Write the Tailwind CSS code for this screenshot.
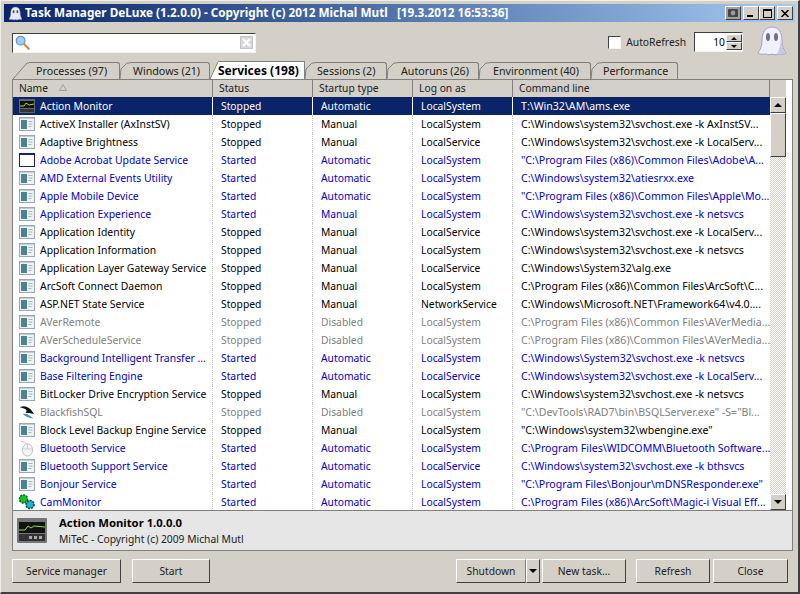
<!DOCTYPE html>
<html lang="en">
<head>
  <meta charset="UTF-8">
  <title>Task Manager DeLuxe</title>
  <script src="https://cdn.jsdelivr.net/npm/@tailwindcss/browser@4"></script>
</head>
<body class="w-[800px] h-[594px] overflow-hidden bg-[#d4d0c8] font-['Noto_Sans','Liberation_Sans',sans-serif] text-[10.3px] leading-none text-black">
  <div class="w-[800px] h-[594px] flex flex-col pt-[4px] px-[4px] pb-[4px] border-b-[2px] border-r-[2px] border-t border-l border-b-[#404040] border-r-[#404040] border-t-[#f0eee8] border-l-[#f0eee8]">
    <!-- title bar -->
    <div class="h-[18px] -mt-[1px] -mx-[1px] flex items-center justify-between bg-gradient-to-r from-[#0a246a] to-[#a6caf0] pl-[4px] pr-[2px] shrink-0">
      <div class="flex items-center gap-[2px] text-white font-bold text-[11.75px] whitespace-pre">
        <svg width="15" height="15" viewBox="0 0 32 32"><path d="M16 2C9 2 6 8 6 15c0 6-2 10-4 13 3 2 6 0 8 1 2 1 4 1 6 0 2 1 4 1 6 0 2-1 5 1 8-1-2-3-4-7-4-13 0-7-3-13-10-13z" fill="#e8e8f4" stroke="#8888b0"/><ellipse cx="12" cy="12" rx="2" ry="3.5" fill="#555"/><ellipse cx="20" cy="12" rx="2" ry="3.5" fill="#555"/></svg>
        <span>Task Manager DeLuxe (1.2.0.0) - Copyright (c) 2012 Michal Mutl   [19.3.2012 16:53:36]</span>
      </div>
      <div class="flex items-center">
        <div class="w-[16px] h-[14px] bg-[#a0a0a0] border border-t-white border-l-white border-b-[#404040] border-r-[#404040] flex items-center justify-center mr-[2px]">
          <svg width="10" height="8" viewBox="0 0 10 8"><rect width="10" height="8" rx="1" fill="#444"/><circle cx="5" cy="4" r="2.4" fill="#999"/></svg>
        </div>
        <div class="w-[16px] h-[14px] bg-[#d4d0c8] border border-t-white border-l-white border-b-[#404040] border-r-[#404040] flex items-end pl-[3px] pb-[2px]"><div class="w-[6px] h-[2px] bg-black"></div></div>
        <div class="w-[16px] h-[14px] bg-[#d4d0c8] border border-t-white border-l-white border-b-[#404040] border-r-[#404040] flex items-center justify-center"><div class="w-[9px] h-[9px] border border-black border-t-[2px]"></div></div>
        <div class="w-[16px] h-[14px] ml-[2px] bg-[#d4d0c8] border border-t-white border-l-white border-b-[#404040] border-r-[#404040] flex items-center justify-center">
          <svg width="8" height="7" viewBox="0 0 8 7"><path d="M0.5 0 L7.5 7 M7.5 0 L0.5 7" stroke="#000" stroke-width="1.5"/></svg>
        </div>
      </div>
    </div>

    <!-- toolbar -->
    <div class="h-[40px] pl-[7px] pr-[7px] flex items-center justify-between shrink-0">
      <div class="w-[244px] h-[20px] mt-[1px] bg-white border border-t-[#404040] border-l-[#404040] border-r-[#f4f2ee] border-b-[#f4f2ee] flex items-center justify-between pl-[2px] pr-[2px]">
        <svg width="15" height="15" viewBox="0 0 16 16"><circle cx="6" cy="6" r="4.6" fill="#9fd0f2" stroke="#6d97c2" stroke-width="1.4"/><path d="M9.6 9.6 L14.5 14.5" stroke="#c9925a" stroke-width="2.6" stroke-linecap="round"/></svg>
        <div class="w-[13px] h-[13px] bg-[#d8d8d8] border border-[#c4c4c4] flex items-center justify-center">
          <svg width="9" height="9" viewBox="0 0 9 9"><path d="M1 1 L8 8 M8 1 L1 8" stroke="#fff" stroke-width="2"/></svg>
        </div>
      </div>
      <div class="flex items-center">
        <div class="w-[13px] h-[13px] bg-white border border-t-[#404040] border-l-[#404040] border-r-[#f4f2ee] border-b-[#f4f2ee] mr-[5px]"></div>
        <span class="mr-[8px] text-[#202020]">AutoRefresh</span>
        <div class="w-[49px] h-[20px] bg-white border border-t-[#404040] border-l-[#404040] border-r-[#f4f2ee] border-b-[#f4f2ee] flex items-center justify-between">
          <span class="ml-auto mr-[1px]">10</span>
          <div class="w-[16px] h-[16px] flex flex-col">
            <div class="h-[8px] bg-[#d4d0c8] border border-t-white border-l-white border-b-[#404040] border-r-[#404040] flex items-center justify-center"><div class="border-x-[3px] border-x-transparent border-b-[3px] border-b-black"></div></div>
            <div class="h-[8px] bg-[#d4d0c8] border border-t-white border-l-white border-b-[#404040] border-r-[#404040] flex items-center justify-center"><div class="border-x-[3px] border-x-transparent border-t-[3px] border-t-black"></div></div>
          </div>
        </div>
        <svg class="ml-[14px] -mt-[2px]" width="30" height="32" viewBox="0 0 30 32"><path d="M15 2C8 2 5 8 5 15c0 7-2 10-4 13 2 2 6 1 8 1 2 1 4 1 6 0 2 1 4 1 6 0 2 0 6 1 8-1-2-3-4-6-4-13 0-7-3-13-10-13z" fill="#f0f0ff" stroke="#a0a0c8"/><path d="M24 10c1 8 1 13 4 18-2 2-6 1-8 1 3-5 4-12 4-19z" fill="#c8c8e4"/><ellipse cx="11" cy="12" rx="2" ry="4" fill="#70708a"/><ellipse cx="19" cy="12" rx="2" ry="4" fill="#70708a"/></svg>
      </div>
    </div>

    <!-- tabs -->
    <div class="h-[17px] ml-[8px] flex items-end shrink-0 text-[#202020] text-[10.7px]">
      <div class="w-[107px] h-[17px] flex"><svg class="shrink-0" width="16" height="17"><path d="M0 17 L14 1 L16 1" fill="none" stroke="#808080"/></svg><div class="flex-1 border-t border-r border-[#808080] rounded-tr-[3px] pt-[3px] pl-[7px]">Processes (97)</div></div>
      <div class="w-[90px] h-[17px] flex"><svg class="shrink-0" width="10" height="17"><path d="M0 17 L1 7 L7 1 L10 1" fill="none" stroke="#808080"/></svg><div class="flex-1 border-t border-r border-[#808080] rounded-tr-[3px] pt-[3px] pl-[3px]">Windows (21)</div></div>
      <div class="w-[95px] h-[18px] flex font-bold text-[12px] text-black relative"><svg class="shrink-0" width="8" height="18"><path d="M0 18 L8 1 L8 18 Z" fill="#fff"/><path d="M0 18 L8 1" fill="none" stroke="#808080"/></svg><div class="flex-1 bg-white border-t border-r border-[#808080] pt-[3px] pl-[0px]">Services (198)</div></div>
      <div class="w-[82px] h-[17px] flex"><svg class="shrink-0" width="10" height="17"><path d="M0 17 L1 7 L7 1 L10 1" fill="none" stroke="#808080"/></svg><div class="flex-1 border-t border-r border-[#808080] rounded-tr-[3px] pt-[3px] pl-[2px]">Sessions (2)</div></div>
      <div class="w-[92px] h-[17px] flex"><svg class="shrink-0" width="10" height="17"><path d="M0 17 L1 7 L7 1 L10 1" fill="none" stroke="#808080"/></svg><div class="flex-1 border-t border-r border-[#808080] rounded-tr-[3px] pt-[3px] pl-[4px]">Autoruns (26)</div></div>
      <div class="w-[112px] h-[17px] flex"><svg class="shrink-0" width="10" height="17"><path d="M0 17 L1 7 L7 1 L10 1" fill="none" stroke="#808080"/></svg><div class="flex-1 border-t border-r border-[#808080] rounded-tr-[3px] pt-[3px] pl-[4px]">Environment (40)</div></div>
      <div class="w-[87px] h-[17px] flex"><svg class="shrink-0" width="10" height="17"><path d="M0 17 L1 7 L7 1 L10 1" fill="none" stroke="#808080"/></svg><div class="flex-1 border-t border-r border-[#808080] rounded-tr-[3px] pt-[3px] pl-[2px]">Performance</div></div>
    </div>

    <!-- list -->
    <div class="ml-[7px] mr-[1px] h-[431px] border-l border-r border-t border-[#808080] flex shrink-0 bg-white">
      <div class="w-[757px] flex flex-col shrink-0">
        <div class="h-[17px] flex bg-[#d4d0c8] text-[#202020] shrink-0 border-r border-[#808080]">
          <div class="w-[200px] shrink-0 px-[6px] pt-[3px] border-r border-[#808080] flex items-start gap-[11px]">Name
            <svg class="mt-[1px]" width="8" height="7"><path d="M4 0.5 L7.5 6.5 L0.5 6.5 Z" fill="none" stroke="#a0a0a0"/></svg>
          </div>
          <div class="w-[100px] shrink-0 px-[6px] pt-[3px] border-r border-[#808080]">Status</div>
          <div class="w-[100px] shrink-0 px-[6px] pt-[3px] border-r border-[#808080]">Startup type</div>
          <div class="w-[100px] shrink-0 px-[6px] pt-[3px] border-r border-[#808080]">Log on as</div>
          <div class="flex-1 px-[6px] pt-[3px]">Command line</div>
        </div>
        <div id="rows" class="flex flex-col"></div>
      </div>
      <!-- scrollbar -->
      <div class="w-[16px] flex flex-col shrink-0 bg-[repeating-conic-gradient(#d4d0c8_0_25%,#ffffff_0_50%)] bg-[length:2px_2px] -mr-[1px]">
        <div class="h-[17px] bg-[#d4d0c8]"></div>
        <div class="h-[16px] bg-[#d4d0c8] border border-t-white border-l-white border-b-[#404040] border-r-[#404040] flex items-center justify-center"><div class="border-x-[4px] border-x-transparent border-b-[4px] border-b-black"></div></div>
        <div class="h-[44px] bg-[#d4d0c8] border border-t-white border-l-white border-b-[#404040] border-r-[#404040]"></div>
        <div class="flex-1"></div>
        <div class="h-[16px] bg-[#d4d0c8] border border-t-white border-l-white border-b-[#404040] border-r-[#404040] flex items-center justify-center"><div class="border-x-[4px] border-x-transparent border-t-[4px] border-t-black"></div></div>
      </div>
    </div>

    <!-- info panel -->
    <div class="ml-[7px] mr-[1px] h-[41px] bg-[#e6e6e6] border border-[#808080] flex items-center pl-[4px] shrink-0">
      <svg width="30" height="26" viewBox="0 0 30 26" class="mr-[12px]"><rect x="0" y="0" width="30" height="25" rx="1" fill="#777"/><rect x="2" y="4" width="26" height="11" fill="#111"/><path d="M2 12 L8 12 L11 8 L14 10 L17 8 L28 9" fill="none" stroke="#8fe04a" stroke-width="1"/><rect x="2" y="16" width="26" height="7" fill="#333"/><rect x="12" y="18" width="3" height="3" fill="#aaa"/><rect x="17" y="18" width="3" height="3" fill="#aaa"/><rect x="22" y="18" width="3" height="3" fill="#aaa"/></svg>
      <div class="flex flex-col gap-[5px]">
        <span class="font-bold text-[11.3px]">Action Monitor 1.0.0.0</span>
        <span class="text-[#202020]">MiTeC - Copyright (c) 2009 Michal Mutl</span>
      </div>
    </div>

    <!-- buttons -->
    <div class="ml-[7px] mr-[6px] mt-[8px] h-[24px] flex shrink-0 text-[#202020]">
      <button class="w-[109px] h-[24px] bg-[#d4d0c8] border border-t-white border-l-white border-b-[#404040] border-r-[#404040]">Service manager</button>
      <button class="w-[78px] h-[24px] ml-[11px] bg-[#d4d0c8] border border-t-white border-l-white border-b-[#404040] border-r-[#404040]">Start</button>
      <button class="w-[70px] h-[24px] ml-auto bg-[#d4d0c8] border border-t-white border-l-white border-b-[#404040] border-r-[#808080]">Shutdown</button>
      <button class="w-[14px] h-[24px] bg-[#d4d0c8] border border-t-white border-l-white border-b-[#404040] border-r-[#404040] flex items-center justify-center"><span class="border-x-[4px] border-x-transparent border-t-[4px] border-t-black"></span></button>
      <button class="w-[84px] h-[24px] ml-[2px] bg-[#d4d0c8] border border-t-white border-l-white border-b-[#404040] border-r-[#404040]">New task...</button>
      <button class="w-[74px] h-[24px] ml-[10px] bg-[#d4d0c8] border border-t-white border-l-white border-b-[#404040] border-r-[#404040]">Refresh</button>
      <button class="w-[75px] h-[24px] ml-[3px] bg-[#d4d0c8] border border-t-white border-l-white border-b-[#404040] border-r-[#404040]">Close</button>
    </div>
  </div>

  <script>
    'use strict';

    var svc = '<svg width="16" height="14" viewBox="0 0 16 14"><rect x="0.5" y="0.5" width="15" height="13" fill="#f0f2f4" stroke="#9aa8b4"/><rect x="2" y="3" width="6" height="9" fill="#4a8490"/><path d="M9.5 4.5h4M9.5 7h4M9.5 9.5h3" stroke="#a8b4be"/><path d="M1 1.5h14" stroke="#c4ccd4"/></svg>';
    var win = '<svg width="16" height="14" viewBox="0 0 16 14"><rect x="0.5" y="0.5" width="15" height="13" fill="#fff" stroke="#1c1c7c"/><rect x="0" y="0" width="16" height="2" fill="#1c1c7c"/></svg>';
    var mon = '<svg width="16" height="14" viewBox="0 0 16 14"><rect width="16" height="14" fill="#666"/><rect x="1" y="2" width="14" height="7" fill="#111"/><path d="M1 7 L5 7 L7 4 L10 6 L15 5" fill="none" stroke="#8fe04a"/><rect x="1" y="10" width="14" height="3" fill="#333"/></svg>';
    var fish = '<svg width="16" height="16" viewBox="0 0 17 16"><path d="M1 3 C6 0 12 3 16 10 C12 9 10 9 7 9 C10 6 6 4 1 3 Z" fill="#111"/><path d="M4 10 C8 9 11 11 15 15 C10 14 7 13 4 10 Z" fill="#4a90c8"/></svg>';
    var mouse = '<svg width="16" height="17" viewBox="0 0 17 17"><ellipse cx="9" cy="10" rx="5.5" ry="6.5" fill="#f4f4f4" stroke="#bbb"/><path d="M9 4 V9 M4 9 H14" stroke="#ccc"/><path d="M2 1 C5 1 7 2 8 4" fill="none" stroke="#bbb"/></svg>';
    var gears = '<svg width="17" height="16" viewBox="0 0 17 16"><circle cx="5.5" cy="5" r="4" fill="#18c818" stroke="#063" stroke-width="1.6" stroke-dasharray="2 1"/><circle cx="12" cy="10.5" r="4" fill="#18b8c8" stroke="#045" stroke-width="1.6" stroke-dasharray="2 1"/></svg>';

    var S = 'text-black', B = 'text-[#0000c8]', G = 'text-[#808080]';
    var c32 = 'C:\\Windows\\system32\\svchost.exe -k ';
    var C32 = 'C:\\Windows\\System32\\svchost.exe -k ';
    var data = [
      [mon, 'Action Monitor', 'Stopped', 'Automatic', 'LocalSystem', 'T:\\Win32\\AM\\ams.exe', 'sel'],
      [svc, 'ActiveX Installer (AxInstSV)', 'Stopped', 'Manual', 'LocalSystem', c32 + 'AxInstSV...', S],
      [svc, 'Adaptive Brightness', 'Stopped', 'Manual', 'LocalService', c32 + 'LocalServ...', S],
      [win, 'Adobe Acrobat Update Service', 'Started', 'Automatic', 'LocalSystem', '"C:\\Program Files (x86)\\Common Files\\Adobe\\A...', B],
      [svc, 'AMD External Events Utility', 'Started', 'Automatic', 'LocalSystem', 'C:\\Windows\\system32\\atiesrxx.exe', B],
      [svc, 'Apple Mobile Device', 'Started', 'Automatic', 'LocalSystem', '"C:\\Program Files (x86)\\Common Files\\Apple\\Mo...', B],
      [svc, 'Application Experience', 'Started', 'Manual', 'LocalSystem', c32 + 'netsvcs', B],
      [svc, 'Application Identity', 'Stopped', 'Manual', 'LocalService', c32 + 'LocalServ...', S],
      [svc, 'Application Information', 'Stopped', 'Manual', 'LocalSystem', c32 + 'netsvcs', S],
      [svc, 'Application Layer Gateway Service', 'Stopped', 'Manual', 'LocalService', 'C:\\Windows\\System32\\alg.exe', S],
      [svc, 'ArcSoft Connect Daemon', 'Stopped', 'Manual', 'LocalSystem', 'C:\\Program Files (x86)\\Common Files\\ArcSoft\\C...', S],
      [svc, 'ASP.NET State Service', 'Stopped', 'Manual', 'NetworkService', 'C:\\Windows\\Microsoft.NET\\Framework64\\v4.0....', S],
      [svc, 'AVerRemote', 'Stopped', 'Disabled', 'LocalSystem', 'C:\\Program Files (x86)\\Common Files\\AVerMedia...', G],
      [svc, 'AVerScheduleService', 'Stopped', 'Disabled', 'LocalSystem', 'C:\\Program Files (x86)\\Common Files\\AVerMedia...', G],
      [svc, 'Background Intelligent Transfer ...', 'Started', 'Automatic', 'LocalSystem', C32 + 'netsvcs', B],
      [svc, 'Base Filtering Engine', 'Started', 'Automatic', 'LocalService', c32 + 'LocalServ...', B],
      [svc, 'BitLocker Drive Encryption Service', 'Stopped', 'Manual', 'LocalSystem', c32 + 'netsvcs', S],
      [fish, 'BlackfishSQL', 'Stopped', 'Disabled', 'LocalSystem', '"C:\\DevTools\\RAD7\\bin\\BSQLServer.exe" -S="Bl...', G],
      [svc, 'Block Level Backup Engine Service', 'Stopped', 'Manual', 'LocalSystem', '"C:\\Windows\\system32\\wbengine.exe"', S],
      [mouse, 'Bluetooth Service', 'Started', 'Automatic', 'LocalSystem', 'C:\\Program Files\\WIDCOMM\\Bluetooth Software...', B],
      [svc, 'Bluetooth Support Service', 'Started', 'Automatic', 'LocalService', c32 + 'bthsvcs', B],
      [svc, 'Bonjour Service', 'Started', 'Automatic', 'LocalSystem', '"C:\\Program Files\\Bonjour\\mDNSResponder.exe"', B],
      [gears, 'CamMonitor', 'Started', 'Automatic', 'LocalSystem', 'C:\\Program Files (x86)\\ArcSoft\\Magic-i Visual Eff...', B]
    ];

    var out = '';
    data.forEach(function(r){
      var sel = r[6] === 'sel';
      var row = sel ? 'bg-[#0a246a] text-white' : r[6];
      var sep = sel ? 'border-white' : 'border-[#c8c8c8] border-dotted';
      out += '<div class="h-[18px] flex items-center whitespace-nowrap overflow-hidden shrink-0 ' + row + '">' +
        '<div class="w-[200px] shrink-0 h-[18px] flex items-center pl-[5px] gap-[5px] border-r ' + sep + '"><span class="w-[17px] flex justify-center shrink-0">' + r[0] + '</span><span class="text-[10.4px]">' + r[1] + '</span></div>' +
        '<div class="w-[100px] shrink-0 h-[18px] flex items-center pl-[8px] border-r ' + sep + '">' + r[2] + '</div>' +
        '<div class="w-[100px] shrink-0 h-[18px] flex items-center pl-[8px] border-r ' + sep + '">' + r[3] + '</div>' +
        '<div class="w-[100px] shrink-0 h-[18px] flex items-center pl-[8px] border-r ' + sep + '">' + r[4] + '</div>' +
        '<div class="flex-1 h-[18px] flex items-center pl-[8px] text-[10.6px]">' + r[5] + '</div>' +
      '</div>';
    });
    document.getElementById('rows').innerHTML = out;
  </script>
</body>
</html>
